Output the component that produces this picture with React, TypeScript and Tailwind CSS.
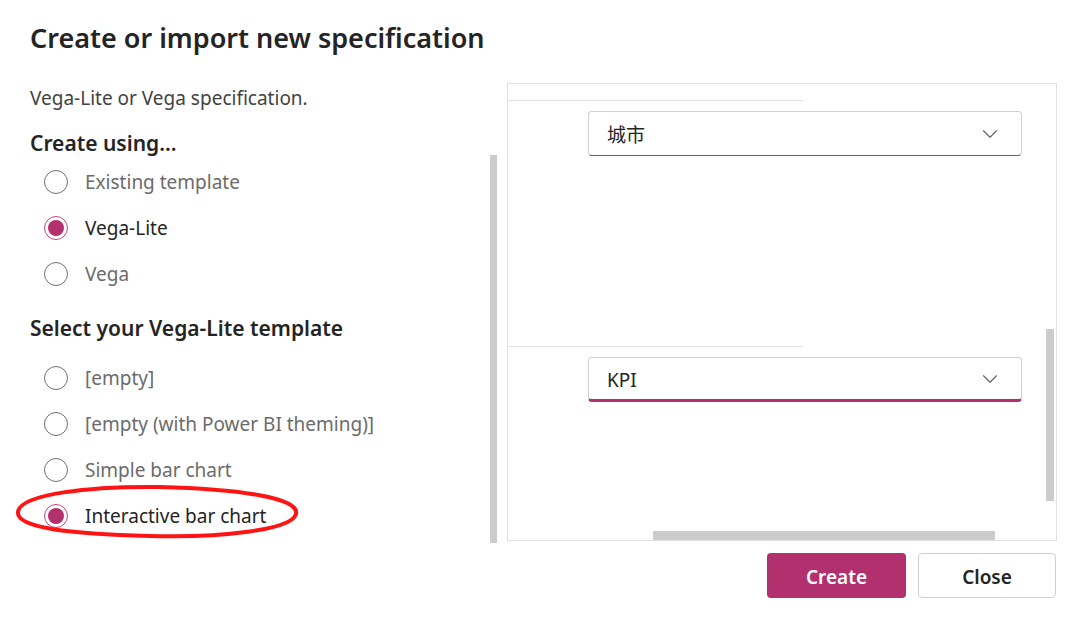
import { ChevronDown } from "lucide-react";

const font = { fontFamily: '"Noto Sans", "Noto Sans CJK SC", sans-serif' };

function Radio({ label, checked }: { label: string; checked?: boolean }) {
  return (
    <div className="flex items-center h-[46px] pl-[14px]">
      <span
        className={
          "w-[24px] h-[24px] rounded-full border flex items-center justify-center bg-white " +
          (checked ? "border-[#c0467f]" : "border-[#707070]")
        }
      >
        {checked && <span className="w-[16px] h-[16px] rounded-full bg-[#b3306f]" />}
      </span>
      <span
        className={
          "ml-[17px] pt-[1px] text-[19px] " + (checked ? "text-[#242424]" : "text-[#6b6b6b]")
        }
      >
        {label}
      </span>
    </div>
  );
}

function Dropdown({ value, active }: { value: string; active?: boolean }) {
  return (
    <div
      className={
        "ml-[80px] w-[434px] h-[45px] rounded-[4px] border border-[#d1d1d1] flex items-center justify-between pl-[18px] pr-[18px] " +
        (active ? "border-b-[3px] border-b-[#b3306f]" : "border-b-[#616161]")
      }
    >
      <span className="pt-[3px] text-[19px] text-[#242424]">{value}</span>
      <ChevronDown size={26} strokeWidth={1} className="text-[#616161]" />
    </div>
  );
}

export default function App() {
  return (
    <div className="relative w-[1080px] h-[618px] bg-white overflow-hidden" style={font}>
      {/* Header */}
      <h1 className="pl-[30px] pt-[18px] h-[83px] text-[27px] font-semibold text-[#242424]">
        Create or import new specification
      </h1>

      <div className="flex">
        {/* Left column */}
        <div className="w-[507px] pl-[30px] flex flex-col">
          <p className="h-[32px] pt-[1px] text-[19px] text-[#424242] leading-[28px]">
            Vega-Lite or Vega specification.
          </p>
          <h2 className="h-[40px] pt-[16px] text-[21px] font-semibold text-[#242424] leading-[24px]">
            Create using...
          </h2>
          <div className="flex h-[388px]">
            <div className="flex-1 pt-[4px]">
              <Radio label="Existing template" />
              <Radio label="Vega-Lite" checked />
              <Radio label="Vega" />
              <div className="h-[58px] flex items-center pt-[5px] text-[21px] font-semibold text-[#242424]">
                Select your Vega-Lite template
              </div>
              <Radio label="[empty]" />
              <Radio label="[empty (with Power BI theming)]" />
              <Radio label="Simple bar chart" />
              <Radio label="Interactive bar chart" checked />
            </div>
            <div className="w-[7px] bg-[#cccccc] mr-[10px]" />
          </div>
        </div>

        {/* Right panel */}
        <div className="flex flex-col">
          <div className="relative w-[550px] h-[458px] border border-[#e0e0e0] pt-[16px]">
            <div className="h-px w-[295px] bg-[#e3e3e3]" />
            <div className="mt-[10px]">
              <Dropdown value="城市" />
            </div>
            <div className="mt-[190px] h-px w-[295px] bg-[#e3e3e3]" />
            <div className="mt-[10px]">
              <Dropdown value="KPI" active />
            </div>
            <div className="absolute right-[2px] top-[245px] w-[8px] h-[172px] bg-[#cccccc]" />
            <div className="absolute left-[145px] bottom-0 w-[342px] h-[9px] bg-[#cccccc]" />
          </div>
          <div className="flex justify-end gap-[12px] mt-[12px] pr-[1px]">
            <button className="w-[139px] h-[45px] pt-[4px] rounded-[4px] bg-[#b3306f] text-white text-[19px] font-semibold">
              Create
            </button>
            <button className="w-[138px] h-[45px] pt-[4px] rounded-[4px] border border-[#d1d1d1] text-[#242424] text-[19px] font-semibold">
              Close
            </button>
          </div>
        </div>
      </div>

      {/* Red annotation ellipse */}
      <svg className="absolute left-[10px] top-[480px]" width="296" height="64" viewBox="0 0 296 64">
        <path
          d="M8 32 C 10 14, 80 6, 150 7 C 230 9, 290 18, 286 34 C 282 50, 210 58, 140 56 C 60 54, 6 48, 8 32 Z"
          fill="none"
          stroke="#ff1414"
          strokeWidth="4"
        />
      </svg>
    </div>
  );
}
